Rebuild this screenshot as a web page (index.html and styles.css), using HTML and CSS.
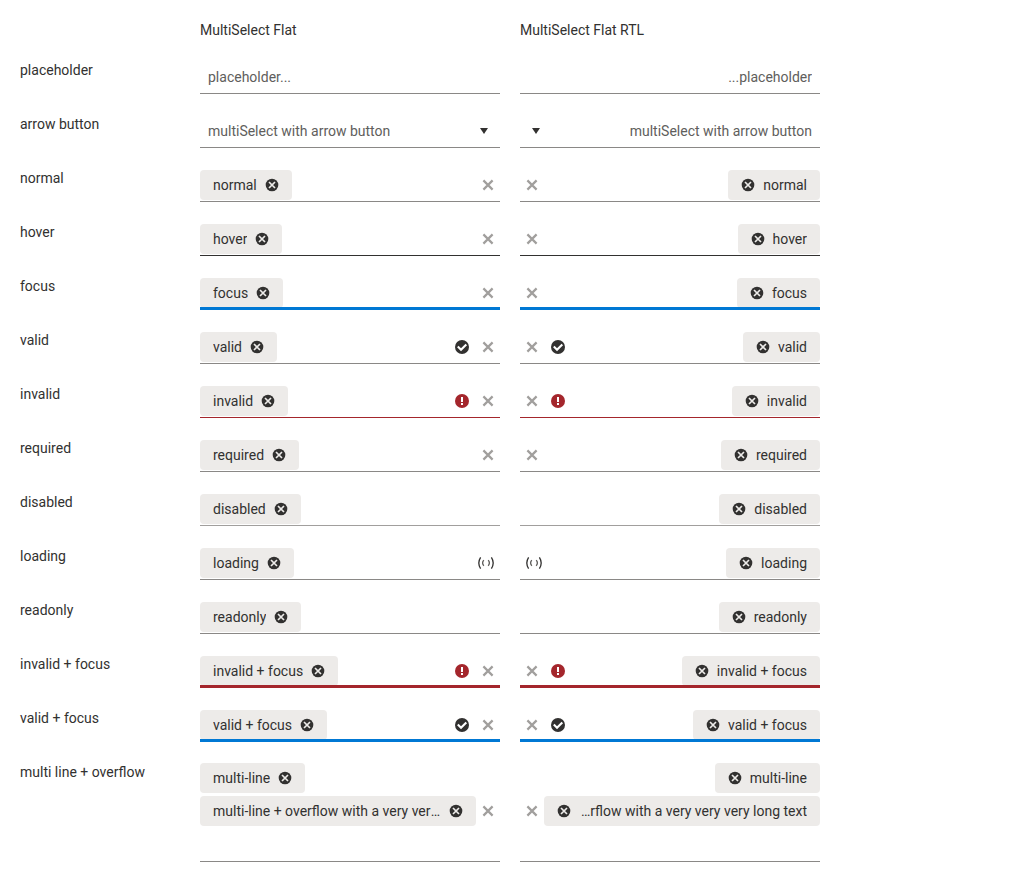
FILE: index.html
```html
<!DOCTYPE html>
<html lang="en">
<head>
<meta charset="utf-8">
<meta name="viewport" content="width=device-width, initial-scale=1">
<title>MultiSelect Flat</title>
<link rel="stylesheet" href="styles.css">
</head>
<body>
<svg class="sprite" aria-hidden="true">
  <symbol id="remove" viewBox="0 0 14 14"><circle cx="7" cy="7" r="6.3" fill="#323130"/><path d="M4 4l6 6M10 4l-6 6" stroke="#edebe9" stroke-width="1.7"/></symbol>
  <symbol id="clear" viewBox="0 0 12 12"><path d="M1.4 1.4l9.2 9.2M10.6 1.4l-9.2 9.2" stroke="#a19f9d" stroke-width="2.2"/></symbol>
  <symbol id="valid" viewBox="0 0 14 14"><circle cx="7" cy="7" r="7" fill="#323130"/><path d="M2.8 6.6l3.2 3.1L11.3 4.4" fill="none" stroke="#fff" stroke-width="2.1"/></symbol>
  <symbol id="invalid" viewBox="0 0 14 14"><circle cx="7" cy="7" r="7" fill="#a4262c"/><path d="M6 3h2v5H6zM6 9h2v2H6z" fill="#fff"/></symbol>
  <symbol id="loading" viewBox="0 0 16 12"><path d="M2.6 .4Q-1 6 2.6 11.6M13.4 .4Q17 6 13.4 11.6" fill="none" stroke="#323130" stroke-width="1.3"/><path d="M5.8 3.2Q3.4 6 5.8 8.8M10.2 3.2Q12.6 6 10.2 8.8" fill="none" stroke="#605e5c" stroke-width="1.3"/></symbol>
  <symbol id="arrow" viewBox="0 0 8 6"><path d="M0 0h8L4 6z" fill="#323130"/></symbol>
</svg>

<main class="grid">
  <h2 class="heading first">MultiSelect Flat</h2>
  <h2 class="heading">MultiSelect Flat RTL</h2>

  <label class="label" for="placeholder">placeholder</label>
  <div class="field"><div class="tags"><input class="input" id="placeholder" placeholder="placeholder..."></div></div>
  <div class="field" dir="rtl"><div class="tags"><input class="input" aria-label="placeholder RTL" placeholder="placeholder..."></div></div>

  <label class="label" for="arrow-button">arrow button</label>
  <div class="field"><div class="tags"><input class="input" id="arrow-button" placeholder="multiSelect with arrow button"></div><button class="toggle" aria-label="Open"><svg><use href="#arrow"/></svg></button></div>
  <div class="field" dir="rtl"><div class="tags"><input class="input" aria-label="arrow button RTL" placeholder="multiSelect with arrow button"></div><button class="toggle" aria-label="Open"><svg><use href="#arrow"/></svg></button></div>

  <label class="label" for="normal">normal</label>
  <div class="field"><div class="tags"><span class="tag"><span class="text">normal</span><button class="remove" aria-label="Remove"><svg><use href="#remove"/></svg></button></span><input class="input" id="normal"></div><button class="clear" aria-label="Clear"><svg><use href="#clear"/></svg></button></div>
  <div class="field" dir="rtl"><div class="tags"><span class="tag"><span class="text">normal</span><button class="remove" aria-label="Remove"><svg><use href="#remove"/></svg></button></span><input class="input" aria-label="normal RTL"></div><button class="clear" aria-label="Clear"><svg><use href="#clear"/></svg></button></div>

  <label class="label" for="hover">hover</label>
  <div class="field is-hover"><div class="tags"><span class="tag"><span class="text">hover</span><button class="remove" aria-label="Remove"><svg><use href="#remove"/></svg></button></span><input class="input" id="hover"></div><button class="clear" aria-label="Clear"><svg><use href="#clear"/></svg></button></div>
  <div class="field is-hover" dir="rtl"><div class="tags"><span class="tag"><span class="text">hover</span><button class="remove" aria-label="Remove"><svg><use href="#remove"/></svg></button></span><input class="input" aria-label="hover RTL"></div><button class="clear" aria-label="Clear"><svg><use href="#clear"/></svg></button></div>

  <label class="label" for="focus">focus</label>
  <div class="field is-focus"><div class="tags"><span class="tag"><span class="text">focus</span><button class="remove" aria-label="Remove"><svg><use href="#remove"/></svg></button></span><input class="input" id="focus"></div><button class="clear" aria-label="Clear"><svg><use href="#clear"/></svg></button></div>
  <div class="field is-focus" dir="rtl"><div class="tags"><span class="tag"><span class="text">focus</span><button class="remove" aria-label="Remove"><svg><use href="#remove"/></svg></button></span><input class="input" aria-label="focus RTL"></div><button class="clear" aria-label="Clear"><svg><use href="#clear"/></svg></button></div>

  <label class="label" for="is-valid">valid</label>
  <div class="field"><div class="tags"><span class="tag"><span class="text">valid</span><button class="remove" aria-label="Remove"><svg><use href="#remove"/></svg></button></span><input class="input" id="is-valid"></div><svg class="status"><use href="#valid"/></svg><button class="clear" aria-label="Clear"><svg><use href="#clear"/></svg></button></div>
  <div class="field" dir="rtl"><div class="tags"><span class="tag"><span class="text">valid</span><button class="remove" aria-label="Remove"><svg><use href="#remove"/></svg></button></span><input class="input" aria-label="valid RTL"></div><svg class="status"><use href="#valid"/></svg><button class="clear" aria-label="Clear"><svg><use href="#clear"/></svg></button></div>

  <label class="label" for="is-invalid">invalid</label>
  <div class="field is-invalid"><div class="tags"><span class="tag"><span class="text">invalid</span><button class="remove" aria-label="Remove"><svg><use href="#remove"/></svg></button></span><input class="input" id="is-invalid" aria-invalid="true"></div><svg class="status"><use href="#invalid"/></svg><button class="clear" aria-label="Clear"><svg><use href="#clear"/></svg></button></div>
  <div class="field is-invalid" dir="rtl"><div class="tags"><span class="tag"><span class="text">invalid</span><button class="remove" aria-label="Remove"><svg><use href="#remove"/></svg></button></span><input class="input" aria-label="invalid RTL" aria-invalid="true"></div><svg class="status"><use href="#invalid"/></svg><button class="clear" aria-label="Clear"><svg><use href="#clear"/></svg></button></div>

  <label class="label" for="required">required</label>
  <div class="field"><div class="tags"><span class="tag"><span class="text">required</span><button class="remove" aria-label="Remove"><svg><use href="#remove"/></svg></button></span><input class="input" id="required" aria-required="true"></div><button class="clear" aria-label="Clear"><svg><use href="#clear"/></svg></button></div>
  <div class="field" dir="rtl"><div class="tags"><span class="tag"><span class="text">required</span><button class="remove" aria-label="Remove"><svg><use href="#remove"/></svg></button></span><input class="input" aria-label="required RTL" aria-required="true"></div><button class="clear" aria-label="Clear"><svg><use href="#clear"/></svg></button></div>

  <label class="label" for="disabled">disabled</label>
  <div class="field is-disabled"><div class="tags"><span class="tag"><span class="text">disabled</span><button class="remove" aria-label="Remove" disabled><svg><use href="#remove"/></svg></button></span><input class="input" id="disabled" disabled></div></div>
  <div class="field is-disabled" dir="rtl"><div class="tags"><span class="tag"><span class="text">disabled</span><button class="remove" aria-label="Remove" disabled><svg><use href="#remove"/></svg></button></span><input class="input" aria-label="disabled RTL" disabled></div></div>

  <label class="label" for="is-loading">loading</label>
  <div class="field"><div class="tags"><span class="tag"><span class="text">loading</span><button class="remove" aria-label="Remove"><svg><use href="#remove"/></svg></button></span><input class="input" id="is-loading"></div><svg class="loading"><use href="#loading"/></svg></div>
  <div class="field" dir="rtl"><div class="tags"><span class="tag"><span class="text">loading</span><button class="remove" aria-label="Remove"><svg><use href="#remove"/></svg></button></span><input class="input" aria-label="loading RTL"></div><svg class="loading"><use href="#loading"/></svg></div>

  <label class="label" for="readonly">readonly</label>
  <div class="field"><div class="tags"><span class="tag"><span class="text">readonly</span><button class="remove" aria-label="Remove"><svg><use href="#remove"/></svg></button></span><input class="input" id="readonly" readonly></div></div>
  <div class="field" dir="rtl"><div class="tags"><span class="tag"><span class="text">readonly</span><button class="remove" aria-label="Remove"><svg><use href="#remove"/></svg></button></span><input class="input" aria-label="readonly RTL" readonly></div></div>

  <label class="label" for="invalid-focus">invalid + focus</label>
  <div class="field is-focus is-invalid"><div class="tags"><span class="tag"><span class="text">invalid + focus</span><button class="remove" aria-label="Remove"><svg><use href="#remove"/></svg></button></span><input class="input" id="invalid-focus" aria-invalid="true"></div><svg class="status"><use href="#invalid"/></svg><button class="clear" aria-label="Clear"><svg><use href="#clear"/></svg></button></div>
  <div class="field is-focus is-invalid" dir="rtl"><div class="tags"><span class="tag"><span class="text">invalid + focus</span><button class="remove" aria-label="Remove"><svg><use href="#remove"/></svg></button></span><input class="input" aria-label="invalid + focus RTL" aria-invalid="true"></div><svg class="status"><use href="#invalid"/></svg><button class="clear" aria-label="Clear"><svg><use href="#clear"/></svg></button></div>

  <label class="label" for="valid-focus">valid + focus</label>
  <div class="field is-focus"><div class="tags"><span class="tag"><span class="text">valid + focus</span><button class="remove" aria-label="Remove"><svg><use href="#remove"/></svg></button></span><input class="input" id="valid-focus"></div><svg class="status"><use href="#valid"/></svg><button class="clear" aria-label="Clear"><svg><use href="#clear"/></svg></button></div>
  <div class="field is-focus" dir="rtl"><div class="tags"><span class="tag"><span class="text">valid + focus</span><button class="remove" aria-label="Remove"><svg><use href="#remove"/></svg></button></span><input class="input" aria-label="valid + focus RTL"></div><svg class="status"><use href="#valid"/></svg><button class="clear" aria-label="Clear"><svg><use href="#clear"/></svg></button></div>

  <label class="label" for="multi-line">multi line + overflow</label>
  <div class="field is-multiline"><div class="tags"><span class="tag"><span class="text">multi-line</span><button class="remove" aria-label="Remove"><svg><use href="#remove"/></svg></button></span><span class="tag"><span class="text">multi-line + overflow with a very very very long text</span><button class="remove" aria-label="Remove"><svg><use href="#remove"/></svg></button></span><input class="input" id="multi-line"></div><button class="clear" aria-label="Clear"><svg><use href="#clear"/></svg></button></div>
  <div class="field is-multiline" dir="rtl"><div class="tags"><span class="tag"><span class="text">multi-line</span><button class="remove" aria-label="Remove"><svg><use href="#remove"/></svg></button></span><span class="tag"><span class="text">multi-line + overflow with a very very very long text</span><button class="remove" aria-label="Remove"><svg><use href="#remove"/></svg></button></span><input class="input" aria-label="multi line + overflow RTL"></div><button class="clear" aria-label="Clear"><svg><use href="#clear"/></svg></button></div>
</main>
</body>
</html>
```
FILE: styles.css
```css
* {
  box-sizing: border-box;
}

body {
  margin: 0;
  background: #fff;
  color: #323130;
  font: 14px/20px Roboto, "Liberation Sans", sans-serif;
}

.sprite {
  display: none;
}

.grid {
  display: grid;
  grid-template-columns: 160px repeat(2, minmax(0, 300px));
  gap: 20px;
  padding: 20px;
}

.heading {
  margin: 0;
  font-size: 14px;
  font-weight: 400;
}

.first {
  grid-column: 2;
}

/* The underline is drawn over the tags so that the thick one covers their edge. */
.field {
  --line: #8a8886;
  --line-width: 1px;
  position: relative;
  display: flex;
  align-items: center;
  padding: 2px 0;
}

.field::after {
  content: "";
  position: absolute;
  inset: auto 0 0;
  height: var(--line-width);
  background: var(--line);
}

.is-hover {
  --line: #323130;
}

.is-focus {
  --line: #0078d4;
  --line-width: 3px;
}

.is-invalid {
  --line: #a4262c;
}

.is-disabled {
  --line: #a19f9d;
}

.is-multiline {
  padding: 1px 0 3px;
}

.tags {
  display: flex;
  flex: 1;
  flex-wrap: wrap;
  gap: 3px;
  min-width: 0;
}

.tag {
  display: flex;
  align-items: center;
  gap: 8px;
  max-width: 100%;
  height: 30px;
  padding: 0 13px;
  border-radius: 4px;
  background: #edebe9;
}

.text {
  overflow: hidden;
  text-overflow: ellipsis;
  white-space: nowrap;
}

.input {
  flex: 1 1 40px;
  min-width: 0;
  height: 30px;
  padding: 0 8px;
  border: 0;
  outline: 0;
  background: transparent;
  color: inherit;
  font: inherit;
}

.input::placeholder {
  color: #605e5c;
  opacity: 1;
}

button {
  display: flex;
  flex: none;
  align-items: center;
  justify-content: center;
  padding: 0;
  border: 0;
  background: none;
}

.remove svg,
.status {
  display: block;
  flex: none;
  width: 14px;
  height: 14px;
}

.status {
  margin-inline: 4px 7px;
}

.clear {
  width: 24px;
  height: 24px;
}

.clear svg {
  width: 12px;
  height: 12px;
}

.toggle {
  width: 32px;
  height: 30px;
}

.toggle svg {
  width: 8px;
  height: 6px;
}

.loading {
  flex: none;
  width: 16px;
  height: 12px;
  margin-inline: 6px;
}
```
